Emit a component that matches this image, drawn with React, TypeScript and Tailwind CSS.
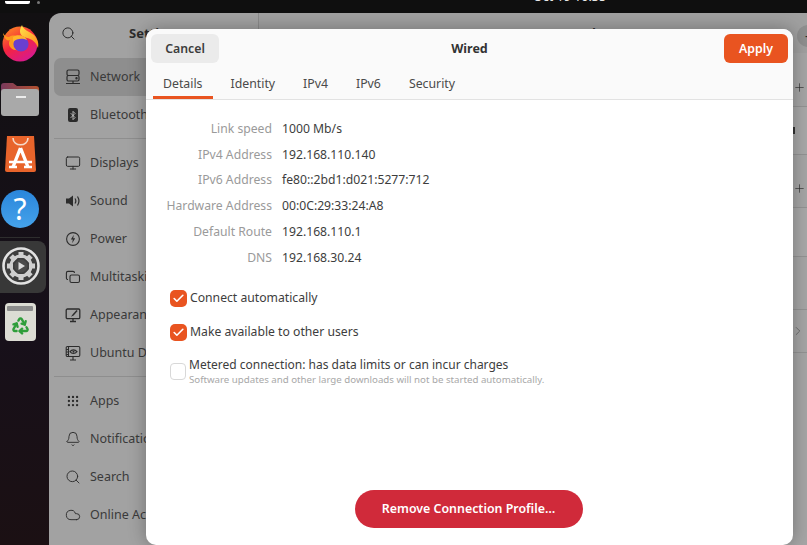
import React from "react";
import { Bell, Bluetooth, Check, Cloud, Grip, Monitor, Plus, Recycle, Search, ChevronRight } from "lucide-react";

const FONT = "font-['Noto_Sans','Open_Sans',sans-serif]";

function NetworkIcon() {
  return (
    <svg width="16" height="16" viewBox="0 0 16 16" fill="none" stroke="currentColor" strokeWidth="1.2">
      <rect x="2" y="1" width="12" height="5.5" rx="1.5" />
      <rect x="2" y="6.5" width="12" height="5.5" rx="1.5" />
      <circle cx="11.5" cy="9.2" r="0.6" fill="currentColor" />
      <path d="M1 14.5h14M8 12v2.5" />
    </svg>
  );
}

function BluetoothIcon() {
  return (
    <div className="flex h-[14px] w-[10px] items-center justify-center rounded-[2px] bg-[#2b2b2b] text-[#d8d8d8]">
      <Bluetooth size={11} strokeWidth={1.8} />
    </div>
  );
}

function SoundIcon() {
  return (
    <svg width="16" height="16" viewBox="0 0 16 16" fill="none" stroke="currentColor" strokeWidth="1.2">
      <path d="M1 5.5h3L8 2.5v11L4 10.5H1z" fill="currentColor" stroke="none" />
      <path d="M10 5.5c1 1.5 1 3.5 0 5M12.5 3.5c1.8 2.8 1.8 6.2 0 9" />
    </svg>
  );
}

function PowerIcon() {
  return (
    <svg width="16" height="16" viewBox="0 0 16 16" fill="none" stroke="currentColor" strokeWidth="1.1">
      <circle cx="8" cy="8" r="6.4" />
      <path d="M8.8 3.8 5.8 8.6h2l-.6 3.6 3-4.9h-2z" fill="currentColor" stroke="none" />
    </svg>
  );
}

function MultitaskIcon() {
  return (
    <svg width="16" height="16" viewBox="0 0 16 16" fill="none" stroke="currentColor" strokeWidth="1.1">
      <path d="M3 10.5c-1 0-1.6-.6-1.6-1.5V4c0-1 .6-1.6 1.6-1.6h5c1 0 1.5.5 1.5 1.6" />
      <rect x="5" y="6" width="9.5" height="7.5" rx="1.6" />
    </svg>
  );
}

function AppearanceIcon() {
  return (
    <svg width="16" height="16" viewBox="0 0 16 16" fill="none" stroke="currentColor" strokeWidth="1.3">
      <rect x="1.2" y="2" width="13.6" height="9.6" rx="1.2" />
      <path d="M5 14.5h6M8 11.6v2.9" />
      <path d="M11.5 3 7.5 7.5 6 9.8l2.6-1.2L12.6 4z" fill="currentColor" stroke="none" />
    </svg>
  );
}

function UbuntuDesktopIcon() {
  return (
    <svg width="16" height="16" viewBox="0 0 16 16" fill="none" stroke="currentColor" strokeWidth="1.1">
      <rect x="1.2" y="1.5" width="13.6" height="10" rx="1.2" />
      <path d="M1.2 4.5h2.3M1.2 7h2.3M1.2 9.5h2.3M3.5 1.5v10M5 15h6M8 11.5V15" />
      <path d="M5 6.7c1.8-2.4 5-2.4 7 0-2 2.4-5.2 2.4-7 0z" />
      <circle cx="8.5" cy="6.7" r="1" fill="currentColor" stroke="none" />
    </svg>
  );
}

function SideRow({ icon, label, active }: { icon: React.ReactNode; label: string; active?: boolean }) {
  return (
    <div className={`mx-[5px] flex h-[38px] items-center rounded-[7px] pl-[7px] ${active ? "bg-[#8e8e8e]" : ""}`}>
      <div className="flex w-[24px] shrink-0 justify-center text-[#2c2c2c]">{icon}</div>
      <span className="ml-[5px] whitespace-nowrap text-[12.5px] text-[#3a3a3a]">{label}</span>
    </div>
  );
}

function Firefox() {
  return (
    <svg width="38" height="38" viewBox="0 0 38 38">
      <defs>
        <linearGradient id="ff1" x1="0" y1="0" x2="0.6" y2="1">
          <stop offset="0" stopColor="#ff9a1f" />
          <stop offset="0.55" stopColor="#f5243f" />
          <stop offset="1" stopColor="#d81a8c" />
        </linearGradient>
        <linearGradient id="ff2" x1="0" y1="0" x2="1" y2="1">
          <stop offset="0" stopColor="#ffe34a" />
          <stop offset="1" stopColor="#ff8a1c" />
        </linearGradient>
      </defs>
      <circle cx="19" cy="20" r="17.5" fill="url(#ff1)" />
      <path d="M21 1c1 5 7 6 12 10 4 4 5 9 4 13-2-6-6-9-11-10-4-1-7-3-7-7 0-2 1-4 2-6z" fill="url(#ff2)" />
      <path d="M2 9c2 3 3 4 6 4 3-2 9-2 13 1 3 2 4 7 1 10-3 3-9 3-12 0-3-3-2-7-1-8-2 1-4 0-5-2-1-2-2-3-2-5z" fill="#ff9b1f" />
      <circle cx="20" cy="20" r="7.6" fill="#6a3fd0" />
      <path d="M12 13c4-3 12-2 14 3-4-2-10-2-14 2z" fill="#ffb52c" />
    </svg>
  );
}

function Files() {
  return (
    <svg width="40" height="36" viewBox="0 0 40 36">
      <defs>
        <linearGradient id="fb" x1="0" y1="0" x2="1" y2="0">
          <stop offset="0" stopColor="#7a3a5c" />
          <stop offset="1" stopColor="#b3512f" />
        </linearGradient>
      </defs>
      <path d="M1 5a3 3 0 0 1 3-3h9l4 3h19a3 3 0 0 1 3 3v8H1z" fill="url(#fb)" />
      <rect x="1" y="8" width="38" height="27" rx="3" fill="#a9a9a9" />
      <rect x="16" y="15" width="10" height="2" fill="#ececec" />
    </svg>
  );
}

function AppCenter() {
  return (
    <svg width="31" height="36" viewBox="0 0 31 36">
      <path d="M2 0h27l2 34a2 2 0 0 1-2 2H2a2 2 0 0 1-2-2z" fill="#e8642b" />
      <path d="M8 2c0 9 15 9 15 0" fill="none" stroke="#f5d9c8" strokeWidth="1.6" />
      <path d="M15.5 12 8 31M15.5 12 23 31" stroke="#fff" strokeWidth="3.4" fill="none" />
      <path d="M4 26h23M4 31h8M19 31h8" stroke="#fff" strokeWidth="2.4" />
    </svg>
  );
}

function Gear() {
  const teeth = [0, 45, 90, 135, 180, 225, 270, 315];
  return (
    <svg width="38" height="38" viewBox="0 0 38 38">
      <circle cx="19" cy="19" r="17.5" fill="#3e3e3e" stroke="#e2e2e2" strokeWidth="2.6" />
      {teeth.map((a) => (
        <rect key={a} x="16.5" y="5" width="5" height="6" fill="#cfcfcf" transform={`rotate(${a} 19 19)`} />
      ))}
      <circle cx="19" cy="19" r="10" fill="none" stroke="#cfcfcf" strokeWidth="3" />
      <circle cx="19" cy="19" r="6.5" fill="#4a4a4a" />
      <path d="M16.5 15v8l6.5-4z" fill="#dcdcdc" />
    </svg>
  );
}

function Dock() {
  return (
    <div className="flex w-[49px] shrink-0 flex-col items-center bg-[linear-gradient(#121012,#17101a_60%,#1b1013)]">
      <div className="mt-[11px] -ml-[9px]">
        <Firefox />
      </div>
      <div className="mt-[19px] -ml-[9px]">
        <Files />
      </div>
      <div className="mt-[19px] -ml-[9px]">
        <AppCenter />
      </div>
      <div className="mt-[18px] -ml-[9px] flex h-[38px] w-[38px] items-center justify-center rounded-full bg-[linear-gradient(#2a86db,#45a2ea)] text-[30px] leading-none text-white">
        ?
      </div>
      <div className="mt-[9px] -ml-[9px] h-px w-[40px] bg-[#2e2e2e]" />
      <div className="mt-[3px] -ml-[3px] flex h-[52px] w-[46px] items-center rounded-r-[8px] bg-[#383838] pb-[2px] pl-[2px]">
        <Gear />
      </div>
      <div className="mt-[10px] -ml-[9px] flex h-[38px] w-[31px] flex-col items-center rounded-[4px] bg-[#dcdcd4] pt-[3px]">
        <div className="h-[5px] w-[26px] rounded-[1px] bg-[#8c8c8c]" />
        <Recycle size={19} strokeWidth={3} className="mt-[5px] text-[#2f9e3a]" />
      </div>
    </div>
  );
}

function Sidebar() {
  return (
    <div className="w-[210px] shrink-0 border-r border-[#8b8b8b] bg-[#a2a2a2]">
      <div className="flex h-[40px] items-center pl-[12px] pt-[1px]">
        <Search size={15} strokeWidth={1.6} className="text-[#2c2c2c]" />
        <span className="ml-[53px] text-[13px] font-bold text-[#2c2c2c]">Settings</span>
      </div>
      <div className="mt-[5px]">
        <SideRow icon={<NetworkIcon />} label="Network" active />
        <SideRow icon={<BluetoothIcon />} label="Bluetooth" />
        <div className="mx-[5px] mt-[4px] mb-[5px] h-px bg-[#8e8e8e]" />
        <SideRow icon={<Monitor size={16} strokeWidth={1.5} />} label="Displays" />
        <SideRow icon={<SoundIcon />} label="Sound" />
        <SideRow icon={<PowerIcon />} label="Power" />
        <SideRow icon={<MultitaskIcon />} label="Multitasking" />
        <SideRow icon={<AppearanceIcon />} label="Appearance" />
        <SideRow icon={<UbuntuDesktopIcon />} label="Ubuntu Desktop" />
        <div className="mx-[5px] mt-[4px] mb-[5px] h-px bg-[#8e8e8e]" />
        <SideRow icon={<Grip size={14} strokeWidth={2} />} label="Apps" />
        <SideRow icon={<Bell size={16} strokeWidth={1.4} />} label="Notifications" />
        <SideRow icon={<Search size={16} strokeWidth={1.4} />} label="Search" />
        <SideRow icon={<Cloud size={16} strokeWidth={1.4} />} label="Online Accounts" />
      </div>
    </div>
  );
}

// the part of the network page that still shows to the right of the dialog
function MainPage() {
  return (
    <div className="flex min-w-0 flex-1 flex-col bg-[#a5a5a5] text-[#2c2c2c]">
      <div className="flex h-[40px] shrink-0 items-center justify-end bg-[#a0a0a0] pt-[2px]">
        <span className="mr-[197px] text-[13px] font-bold">Network</span>
        <div className="mt-[3px] mr-[-14px] flex h-[22px] w-[24px] items-center rounded-full bg-[#8f8f8f] pl-[8px] text-[14px] leading-none">
          –
        </div>
      </div>
      <div className="flex h-[54px] shrink-0 items-end justify-end border-b border-[#939393] pb-[12px] pr-[1px]">
        <Plus size={13} strokeWidth={1.2} />
      </div>
      <div className="flex h-[48px] shrink-0 items-center border-b border-[#939393] bg-[#a8a8a8] pl-[534px]">
        <div className="h-[7px] w-[2px] bg-[#333333]" />
      </div>
      <div className="flex h-[53px] shrink-0 items-end justify-end border-b border-[#939393] pb-[12px] pr-[1px]">
        <Plus size={13} strokeWidth={1.2} />
      </div>
      <div className="h-[49px] shrink-0 border-b border-[#939393] bg-[#a8a8a8]" />
      <div className="h-[53px] shrink-0 border-b border-[#939393]" />
      <div className="flex h-[43px] shrink-0 items-center border-b border-[#939393] pl-[532px]">
        <ChevronRight size={14} strokeWidth={1.2} className="text-[#555555]" />
      </div>
    </div>
  );
}

function InfoRows() {
  const rows = [
    ["Link speed", "1000 Mb/s"],
    ["IPv4 Address", "192.168.110.140"],
    ["IPv6 Address", "fe80::2bd1:d021:5277:712"],
    ["Hardware Address", "00:0C:29:33:24:A8"],
    ["Default Route", "192.168.110.1"],
    ["DNS", "192.168.30.24"],
  ];
  return (
    <div className="-ml-[4px] grid grid-cols-[106px_1fr] gap-x-[10px] text-[12.2px] leading-[25.7px]">
      {rows.map(([k, v]) => (
        <React.Fragment key={k}>
          <span className="whitespace-nowrap text-right text-[#9a9a9a]">{k}</span>
          <span className="text-[#3d3d3d]">{v}</span>
        </React.Fragment>
      ))}
    </div>
  );
}

function CheckedRow({ label }: { label: string }) {
  return (
    <div className="flex h-[18px] items-center">
      <div className="flex h-[17px] w-[17px] items-center justify-center rounded-[5px] bg-[#e95420] text-white">
        <Check size={13} strokeWidth={3} />
      </div>
      <span className="ml-[3px] text-[12.2px] text-[#3d3d3d]">{label}</span>
    </div>
  );
}

function Dialog() {
  const tabs = ["Details", "Identity", "IPv4", "IPv6", "Security"];
  return (
    <div className="absolute left-[146px] top-[29px] flex h-[516px] w-[647px] flex-col rounded-[10px] bg-white shadow-[0_0_18px_rgba(0,0,0,0.3)]">
      <div className="h-[71px] shrink-0 rounded-t-[10px] border-b border-[#e2e2e2] bg-[#fafafa]">
        <div className="flex items-center px-[5px] pt-[5px]">
          <button type="button" className="h-[29px] w-[68px] rounded-[6px] bg-[#ebebeb] pt-[1px] text-[12.3px] font-semibold text-[#3d3d3d]">
            Cancel
          </button>
          <span className="mr-[4px] flex-1 pt-[2px] text-center text-[12.5px] font-bold text-[#333333]">Wired</span>
          <button type="button" className="h-[29px] w-[64px] rounded-[6px] bg-[#e95420] pt-[1px] text-[12.3px] font-semibold text-white">
            Apply
          </button>
        </div>
        <div className="mt-[5px] flex pl-[7px]">
          {tabs.map((t, i) => (
            <div
              key={t}
              className={`flex h-[31px] items-center px-[10px] pt-[2px] text-[12.3px] text-[#4a4a4a] ${i === 0 ? "border-b-[3px] border-[#e95420] pt-[5px]" : "ml-[8px]"}`}
            >
              {t}
            </div>
          ))}
        </div>
      </div>
      <div className="flex flex-1 flex-col px-[24px] pt-[16px]">
        <InfoRows />
        <div className="mt-[19px] flex flex-col gap-[16px]">
          <CheckedRow label="Connect automatically" />
          <CheckedRow label="Make available to other users" />
        </div>
        <div className="mt-[15px] flex items-center">
          <div className="mt-[2px] h-[17px] w-[16px] rounded-[4px] border border-[#d8d8d8] bg-white" />
          <div className="ml-[3px] flex flex-col">
            <span className="text-[12px] leading-[18px] text-[#3d3d3d]">Metered connection: has data limits or can incur charges</span>
            <span className="text-[9.7px] leading-[11px] text-[#a8a8a8]">Software updates and other large downloads will not be started automatically.</span>
          </div>
        </div>
        <div className="mt-auto mb-[17px] flex justify-center">
          <button type="button" className="mr-[2px] h-[38px] w-[228px] rounded-full bg-[#d02a3a] text-[12.4px] font-semibold text-white">
            Remove Connection Profile…
          </button>
        </div>
      </div>
    </div>
  );
}

export default function App() {
  return (
    <div className={`relative flex h-[545px] w-[807px] flex-col overflow-hidden bg-[#121012] ${FONT}`}>
      <div className="relative h-[13px] shrink-0 overflow-hidden bg-[#0f0f0f]">
        <div className="flex h-[4px] items-end pl-[5px]">
          <div className="h-[3px] w-[25px] rounded-b-[2px] bg-white" />
          <div className="ml-[7px] h-[3px] w-[3px] rounded-full bg-[#777777]" />
        </div>
        <span className="absolute left-[533px] top-[-12px] text-[12.5px] leading-[18px] text-[#e8e8e8]">Oct 19 10:35</span>
      </div>
      <div className="flex min-h-0 flex-1">
        <Dock />
        <div className="flex min-w-0 flex-1 overflow-hidden rounded-tl-[12px]">
          <Sidebar />
          <MainPage />
        </div>
      </div>
      <Dialog />
    </div>
  );
}
